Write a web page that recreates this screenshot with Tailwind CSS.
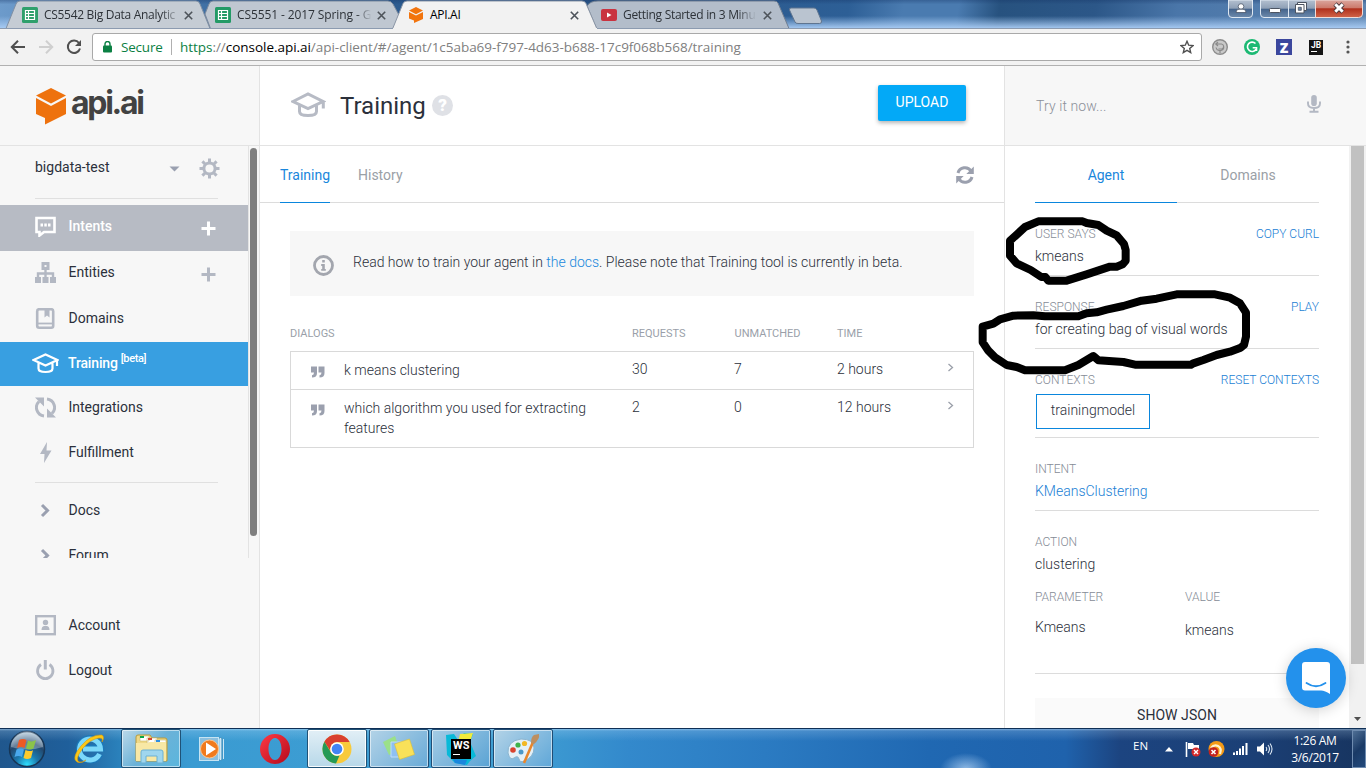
<!DOCTYPE html>
<html lang="en">
<head>
<meta charset="utf-8">
<title>API.AI</title>
<script src="https://cdn.jsdelivr.net/npm/@tailwindcss/browser@4"></script>
</head>
<body class="relative flex h-[768px] w-[1366px] flex-col overflow-hidden bg-white font-['Roboto',sans-serif] text-[14px] text-[#2b303b]">

<!-- tab strip -->
<div class="relative h-[29px] shrink-0 bg-[linear-gradient(100deg,#6d9bcb_0%,#2c5d93_22%,#2b5687_45%,#2d5f96_62%,#4a7bb0_66%,#4a7bb0_70%,#27527f_73%,#2c5788_80%,#4a76a9_86%,#5d84b0_100%)]">
  <div class="absolute inset-0 bg-[linear-gradient(180deg,rgba(20,50,100,0.35)_0%,transparent_15%,transparent_55%,rgba(170,205,245,0.9)_95%)]"></div>
  <svg class="absolute inset-0" width="1366" height="29" viewBox="0 0 1366 29">
    <path d="M596.500 28.500 587 6 Q590 1 598 1 H774 Q777 1 778 3 L789 28.500" fill="#b3bdca" stroke="#6f7d90"/>
    <path d="M6 28.500 L16 4 Q17 1 20 1 H196 Q199 1 200 4 L210 28.500Z" fill="#c5ccd4" stroke="#8090a4"/>
    <path d="M210.500 28.500 L205 14 L209 4 Q210 1 213 1 H388 Q391 1 393 4 L400 17 L395 28.500Z" fill="#bfc7d1" stroke="#7b8a9e"/>
    <path d="M392.500 29 L403 3.500 Q404 1 407 1 H582 Q585 1 586 3.500 L597 29Z" fill="#f2f2f2" stroke="#8a95a5"/>
    <path d="M0 28.500H393M597 28.500H1366" stroke="#8c9bb0"/>
    <path d="M393 29H597" stroke="#f2f2f2" stroke-width="2"/>
    <path d="M789.500 10 Q789 8 791 8 H814 Q816 8 817 10 L821.500 21 Q822 23.500 819.500 23.500 H798 Q795.500 23.500 795 22Z" fill="#bac4d0" stroke="#5f7590"/>
  </svg>
  <div class="relative flex h-[30px] items-center pl-[22px] font-['Open_Sans',sans-serif] text-[12px] tracking-[-0.3px] text-[#2d3238]">
    <div class="flex w-[193px] items-center">
      <svg width="16" height="16" viewBox="0 0 16 16"><rect width="16" height="16" rx="1.500" fill="#2fa06c"/><path d="M3.500 3.500h9v9h-9zM3.500 6.500h9M3.500 9.500h9M6.500 3.500v9" fill="none" stroke="#fff" stroke-width="1.200"/></svg>
      <span class="ml-[6px] w-[137px] whitespace-nowrap tracking-[-0.3px] [mask-image:linear-gradient(90deg,#000_85%,transparent_100%)]">CS5542 Big Data Analytic</span>
      <svg class="ml-[3px]" width="9" height="9" viewBox="0 0 9 9"><path d="M.8.8l7.400 7.400M8.200.8L.8 8.200" stroke="#4d535a" stroke-width="1.600"/></svg>
    </div>
    <div class="flex w-[193px] items-center">
      <svg width="16" height="16" viewBox="0 0 16 16"><rect width="16" height="16" rx="1.500" fill="#239a66"/><path d="M3.500 3.500h9v9h-9zM3.500 6.500h9M3.500 9.500h9M6.500 3.500v9" fill="none" stroke="#fff" stroke-width="1.200"/></svg>
      <span class="ml-[6px] w-[136px] whitespace-nowrap tracking-[-0.1px] [mask-image:linear-gradient(90deg,#000_88%,transparent_99%)]">CS5551 - 2017 Spring - G</span>
      <svg class="ml-[4px]" width="9" height="9" viewBox="0 0 9 9"><path d="M.8.8l7.400 7.400M8.200.8L.8 8.200" stroke="#4d535a" stroke-width="1.600"/></svg>
    </div>
    <div class="flex w-[193px] items-center text-black">
      <svg width="16" height="16" viewBox="0 0 16 16"><path d="M1 3.600 8 0l7 3.600L8 7.200ZM1 5l7 3.600L15 5v7l-9 4v-2.500L1 11.500Z" fill="#f2740d"/></svg>
      <span class="ml-[6px] w-[136px] whitespace-nowrap">API.AI</span>
      <svg class="ml-[4px]" width="9" height="9" viewBox="0 0 9 9"><path d="M.8.8l7.400 7.400M8.200.8L.8 8.200" stroke="#4d535a" stroke-width="1.600"/></svg>
    </div>
    <div class="flex w-[193px] items-center">
      <svg width="16" height="12" viewBox="0 0 16 12"><rect width="16" height="12" rx="2" fill="#c93340"/><path d="M6 3.500v5L10.500 6z" fill="#fff"/></svg>
      <span class="ml-[6px] w-[136px] whitespace-nowrap [mask-image:linear-gradient(90deg,#000_84%,transparent_98%)]">Getting Started in 3 Minu</span>
      <svg class="ml-[4px]" width="9" height="9" viewBox="0 0 9 9"><path d="M.8.8l7.400 7.400M8.200.8L.8 8.200" stroke="#4d535a" stroke-width="1.600"/></svg>
    </div>
  </div>
  <svg class="absolute top-0 right-0" width="140" height="20" viewBox="0 0 140 20">
    <defs>
      <linearGradient id="g1" x1="0" y1="0" x2="0" y2="1"><stop offset="0" stop-color="#b4c0d0"/><stop offset=".48" stop-color="#8e9fb5"/><stop offset=".5" stop-color="#43628a"/><stop offset="1" stop-color="#6d8aac"/></linearGradient>
      <linearGradient id="g2" x1="0" y1="0" x2="0" y2="1"><stop offset="0" stop-color="#dba69d"/><stop offset=".45" stop-color="#cc7a6b"/><stop offset=".5" stop-color="#b0301c"/><stop offset="1" stop-color="#d1654a"/></linearGradient>
    </defs>
    <path d="M2.500 0v14q0 3.500 3.500 3.500h17q3.500 0 3.500-3.500V0z" fill="url(#g1)" stroke="#dfe8f2"/>
    <path d="M34.500 0v14q0 3.500 3.500 3.500h91V0z" fill="url(#g1)" stroke="#dfe8f2"/>
    <path d="M89.500 0v17.500h43q4 0 4-3.500V0z" fill="url(#g2)" stroke="#f0dcd8"/>
    <path d="M62.500 0v17.500" fill="none" stroke="#dfe8f2"/>
    <circle cx="15" cy="6.500" r="2.800" fill="#fff" stroke="#4a5568" stroke-width=".8"/><path d="M10 12.500q0-3.300 3-3.300h4q3 0 3 3.300z" fill="#fff" stroke="#4a5568" stroke-width=".8"/>
    <rect x="43.500" y="8.500" width="11" height="4" rx="1" fill="#fff" stroke="#4c5461"/>
    <path d="M71.500 2.500h9v8h-9z" fill="#fff" stroke="#4c5461"/><path d="M69.500 4.500h8.500v8.500h-8.500z" fill="#fff" stroke="#4c5461"/><path d="M72.300 7.300h3v3h-3z" fill="#6c87a8" stroke="#4c5461" stroke-width=".8"/>
    <path d="M109 4l8 8M117 4l-8 8" stroke="#47363b" stroke-width="4.600"/><path d="M109.300 4.300l7.400 7.400M116.700 4.300l-7.400 7.400" stroke="#fff" stroke-width="3"/>
  </svg>
</div>

<!-- toolbar -->
<div class="flex h-[37px] shrink-0 items-center border-b border-[#b1b1b1] bg-[#f2f2f2] pl-[10px]">
  <svg width="16" height="16" viewBox="0 0 16 16"><path d="M15 8H2.500M8 1.800 1.800 8 8 14.200" fill="none" stroke="#4f4f4f" stroke-width="2"/></svg>
  <svg class="ml-[13px]" width="16" height="16" viewBox="0 0 16 16"><path d="M0 8h12.500M7 1.800 13.200 8 7 14.200" fill="none" stroke="#cfcfcf" stroke-width="2"/></svg>
  <svg class="ml-[11px]" width="16" height="16" viewBox="0 0 16 16"><path d="M13 4A6.200 6.200 0 1 0 14 9.500" fill="none" stroke="#4f4f4f" stroke-width="2"/><path d="M15 1v6H9z" fill="#4f4f4f"/></svg>
  <div class="ml-[10px] flex h-[28px] w-[1110px] items-center rounded-[3px] border border-[#a9a9a9] bg-white font-['Open_Sans',sans-serif] text-[13.5px]">
    <svg class="ml-[10px]" width="9" height="12" viewBox="0 0 9 12"><rect y="4.500" width="9" height="7" rx="1" fill="#0b8043"/><path d="M2 5V3a2.500 2.500 0 0 1 5 0v2" fill="none" stroke="#0b8043" stroke-width="1.400"/></svg>
    <span class="ml-[9px] w-[50px] tracking-[-0.2px] text-[#0b8043]">Secure</span>
    <span class="h-[16px] w-px bg-[#b0b0b0]"></span>
    <span class="ml-[8px] w-[1000px] whitespace-nowrap tracking-[-0.035px] text-[#808080]"><span class="text-[#0b8043]">https</span>://<span class="text-black">console.api.ai</span>/api-client/#/agent/1c5aba69-f797-4d63-b688-17c9f068b568/training</span>
    <svg width="14" height="14" viewBox="0 0 14 14"><path d="M7 1.300l1.700 3.900 4.300.4-3.300 2.800 1 4.200L7 10.400l-3.700 2.200 1-4.200L1 5.600l4.300-.4z" fill="none" stroke="#505050" stroke-width="1.400"/></svg>
  </div>
  <svg class="ml-[10px]" width="16" height="16" viewBox="0 0 16 16"><circle cx="8" cy="8" r="7.300" fill="#c9c9c9" stroke="#8c8c8c" stroke-width="1.400"/><path d="M6 3 3.800 5 6 7M4 5h5.500a2.600 2.600 0 0 1 .5 5H6.500M4 8.500q.5 2.500 3 3h2q2.500-.5 3-3M8 11.500V14" fill="none" stroke="#8a8a8a" stroke-width="1.200"/></svg>
  <svg class="ml-[16px]" width="16" height="16" viewBox="0 0 16 16"><circle cx="8" cy="8" r="8" fill="#1cb973"/><path d="M11.500 4.500A4.700 4.700 0 1 0 12 10.500M12.500 12V8.700H8.700" fill="none" stroke="#fff" stroke-width="1.600"/></svg>
  <div class="ml-[16px] flex h-[16px] w-[16px] items-center justify-center bg-[#3b479d] font-['Open_Sans',sans-serif] text-[14px] font-extrabold text-white">Z</div>
  <div class="ml-[17px] flex h-[15px] w-[14px] flex-col bg-[#151515] pt-px pl-[2px] text-[8.5px] leading-[9px] font-bold text-white"><span>JB</span><span class="mt-px h-px w-[6px] bg-white"></span></div>
  <svg class="ml-[23px]" width="4" height="14" viewBox="0 0 4 14"><circle cx="2" cy="2" r="1.600" fill="#555"/><circle cx="2" cy="7" r="1.600" fill="#555"/><circle cx="2" cy="12" r="1.600" fill="#555"/></svg>
</div>

<!-- page -->
<div class="flex h-[662px] shrink-0">

  <!-- sidebar -->
  <div class="flex w-[260px] shrink-0 flex-col border-r border-[#e3e3e3] bg-[#f7f7f7]">
    <div class="flex h-[80px] shrink-0 items-center border-b border-[#e3e3e3] pl-[35px]">
      <svg width="32" height="38" viewBox="0 0 32 38"><path d="M1 8.500 16 1l15 7.500L16 16.500ZM1 11l15 8 15-8v16L10 37.500V31L1 27Z" fill="#ee720e"/></svg>
      <span class="-mt-[5px] ml-[4px] font-['Inter',sans-serif] text-[32px] leading-[32px] font-bold tracking-[-2.3px] text-[#424242]">api.ai</span>
    </div>
    <div class="flex h-[412px] shrink-0">
      <div class="flex w-[249px] shrink-0 flex-col overflow-hidden border-r border-[#e3e3e3]">
        <div class="ml-[35px] flex h-[53px] w-[183px] shrink-0 items-center border-b border-[#e0e0e0] pb-[9px]">
          <span class="w-[134px] shrink-0">bigdata-test</span>
          <svg class="mt-[3px] shrink-0" width="11" height="6" viewBox="0 0 11 6"><path d="M.5.500h10L5.500 5.500z" fill="#9aa0b0"/></svg>
          <svg class="mt-[2px] ml-[19px] shrink-0" width="21" height="21" viewBox="0 0 21 21"><circle cx="10.500" cy="10.500" r="5.600" fill="none" stroke="#b3b8c3" stroke-width="3"/><path d="M10.500.5v4M10.500 16.500v4M.5 10.500h4M16.500 10.500h4M3.400 3.400l2.900 2.900M14.700 14.700l2.900 2.900M17.600 3.400l-2.900 2.900M6.300 14.700l-2.900 2.900" stroke="#b3b8c3" stroke-width="3"/></svg>
        </div>
        <div class="mt-[6px] flex h-[46px] shrink-0 items-center bg-[#b7bbc4] pb-[3px] pl-[35px] text-white">
          <svg width="21" height="21" viewBox="0 0 21 21"><path d="M1.500 2h18v14H9L4.500 19.500V16h-3z" fill="none" stroke="#fff" stroke-width="2.600"/><path d="M5.500 9h2.500M9.300 9h2.500M13 9h2.500" stroke="#fff" stroke-width="3"/></svg>
          <span class="ml-[12.500px] w-[132.500px] font-medium">Intents</span>
          <svg class="mt-[3px]" width="15" height="15" viewBox="0 0 15 15"><path d="M7.500 0.500v14M.500 7.500h14" stroke="#fff" stroke-width="3"/></svg>
        </div>
        <div class="flex h-[46px] shrink-0 items-center pb-[3px] pl-[35px]">
          <svg width="21" height="21" viewBox="0 0 21 21"><rect x="8" y="1.500" width="5" height="5" fill="none" stroke="#b3b8c3" stroke-width="3"/><path d="M10.500 7v8M3 15v-3.500h15V15" fill="none" stroke="#b3b8c3" stroke-width="2.400"/><path d="M0 15h6v6H0zM7.500 15h6v6h-6zM15 15h6v6h-6z" fill="#b3b8c3"/></svg>
          <span class="ml-[12.500px] w-[132.500px]">Entities</span>
          <svg class="mt-[3px]" width="15" height="15" viewBox="0 0 15 15"><path d="M7.500 0.500v14M.500 7.500h14" stroke="#b3b8c3" stroke-width="3"/></svg>
        </div>
        <div class="flex h-[45px] shrink-0 items-center pb-[3px] pl-[35px]">
          <svg width="21" height="21" viewBox="0 0 21 21"><rect x="2.200" y="1.200" width="16" height="18.500" rx="2" fill="none" stroke="#b3b8c3" stroke-width="2.600"/><path d="M3 15.500h15" stroke="#b3b8c3" stroke-width="1.800"/><path d="M9.500 1v8.500L12 7.500l2.500 2V1z" fill="#b3b8c3"/></svg>
          <span class="ml-[12.500px]">Domains</span>
        </div>
        <div class="flex h-[44px] shrink-0 items-center bg-[#389fe1] pb-[2px] pl-[32px] text-white">
          <svg width="27" height="21" viewBox="0 0 27 21"><path d="M1.500 7 13.500 1.500 25.500 7 13.500 12.500ZM6.500 10v5.500q0 3.500 7 3.500t7-3.500V10M25 7v6" fill="none" stroke="#fff" stroke-width="2.200"/></svg>
          <span class="ml-[9px] font-medium tracking-[-0.15px]">Training</span>
          <span class="-mt-[7px] ml-[3px] text-[11px] font-medium tracking-[-0.4px]">[beta]</span>
        </div>
        <div class="flex h-[45px] shrink-0 items-center pb-[3px] pl-[35px]">
          <svg width="21" height="21" viewBox="0 0 21 21"><path d="M9 19A8.500 8.500 0 0 1 4 4.500M12 2a8.500 8.500 0 0 1 5 14.500" fill="none" stroke="#b3b8c3" stroke-width="3"/><path d="M0 .5h9v9zM12 11.500v9h9z" fill="#b3b8c3"/></svg>
          <span class="ml-[12.500px]">Integrations</span>
        </div>
        <div class="flex h-[45px] shrink-0 items-center pb-[3px] pl-[35px]">
          <svg width="21" height="21" viewBox="0 0 21 21"><path d="M12 0 5 12h4.500L9 21l7.500-12.500H11.500z" fill="#b3b8c3"/></svg>
          <span class="ml-[12.500px]">Fulfillment</span>
        </div>
        <div class="mt-[6px] ml-[35px] h-px w-[183px] shrink-0 bg-[#e0e0e0]"></div>
        <div class="mt-[5px] flex h-[45px] shrink-0 items-center pl-[34px]">
          <svg width="21" height="21" viewBox="0 0 21 21"><path d="M8 5l5.500 5.500L8 16" fill="none" stroke="#9aa0b0" stroke-width="3"/></svg>
          <span class="ml-[13.500px]">Docs</span>
        </div>
        <div class="flex h-[45px] shrink-0 items-center pl-[34px]">
          <svg width="21" height="21" viewBox="0 0 21 21"><path d="M8 5l5.500 5.500L8 16" fill="none" stroke="#9aa0b0" stroke-width="3"/></svg>
          <span class="ml-[13.500px]">Forum</span>
        </div>
      </div>
      <div class="mt-[2px] ml-px h-[388px] w-[7px] rounded-[4px] bg-[#7f7f7f]"></div>
    </div>
    <div class="mt-[45px] flex h-[45px] items-center pl-[35px]">
      <svg width="21" height="21" viewBox="0 0 21 21"><rect x="1.200" y="1.200" width="18.600" height="18" fill="none" stroke="#b3b8c3" stroke-width="2.400"/><circle cx="10.500" cy="7.500" r="2.700" fill="#b3b8c3"/><path d="M6.500 15q0-3.500 2.500-4h3q2.500.5 2.500 4z" fill="#b3b8c3"/></svg>
      <span class="ml-[12.500px]">Account</span>
    </div>
    <div class="flex h-[45px] items-center pl-[35px]">
      <svg width="21" height="21" viewBox="0 0 21 21"><path d="M6 4.500a7.700 7.700 0 1 0 8.500 0" fill="none" stroke="#b3b8c3" stroke-width="2.800"/><path d="M10.300 0v9.500" stroke="#b3b8c3" stroke-width="3"/></svg>
      <span class="ml-[12.500px]">Logout</span>
    </div>
  </div>

  <!-- training -->
  <div class="flex w-[745px] shrink-0 flex-col border-r border-[#e3e3e3]">
    <div class="flex h-[80px] shrink-0 items-center border-b border-[#e3e3e3] pl-[31px]">
      <svg class="-mt-[2px]" width="35" height="26" viewBox="0 0 35 26"><path d="M2 9.500 17 2l15 7.500-15 7.200ZM8.500 13v6.500q0 4 8.500 4t8.500-4V13M32.300 9.500v7" fill="none" stroke="#b7bbc5" stroke-width="3"/></svg>
      <span class="ml-[14px] w-[92px] text-[24px] leading-[30px]">Training</span>
      <span class="flex h-[21px] w-[21px] items-center justify-center rounded-full bg-[#dfe1e6] text-[17px] leading-[21px] font-black text-white">?</span>
      <span class="-mt-[6px] ml-[425px] flex h-[36px] w-[88px] items-center justify-center rounded-[2px] bg-[#03a9f7] text-[14px] text-white shadow-[0_2px_4px_rgba(0,0,0,0.3)]"><span class="-mt-px">UPLOAD</span></span>
    </div>
    <div class="flex h-[57px] shrink-0 border-b border-[#dcdcdc] pl-[20px] text-[14px] leading-[59px]">
      <span class="h-[57px] w-[50px] border-b border-[#0a86dd] text-[#1a87dc]">Training</span>
      <span class="ml-[28px] w-[598px] text-[#9aa0a6]">History</span>
      <svg class="mt-[20px]" width="18" height="18" viewBox="0 0 18 18"><path d="M2 7A7.200 7.200 0 0 1 15 5M16 11A7.200 7.200 0 0 1 3 13" fill="none" stroke="#9ba0ae" stroke-width="3"/><path d="M17.800.5V8h-7.500zM.2 17.500V10h7.500z" fill="#9ba0ae"/></svg>
    </div>
    <div class="mt-[28px] ml-[30px] flex h-[65px] w-[684px] shrink-0 items-center bg-[#f7f7f7] pl-[23px] font-light">
      <svg class="mt-[3px]" width="21" height="21" viewBox="0 0 21 21"><circle cx="10.500" cy="10.500" r="9" fill="none" stroke="#a3a6ae" stroke-width="2.800"/><path d="M9.200 5h2.600v2.400H9.200zM8.200 9h3.600v5h1v1.800H8.200V14h1v-3h-1z" fill="#a3a6ae"/></svg>
      <span class="-mt-[3px] ml-[19px] whitespace-nowrap">Read how to train your agent in <span class="text-[#1a87dc]">the docs</span>. Please note that Training tool is currently in beta.</span>
    </div>
    <div class="mt-[30px] ml-[30px] grid h-[16px] grid-cols-[342px_102.5px_102.5px_100px] text-[11px] leading-[16px] text-[#9a9fa9]">
      <span>DIALOGS</span><span>REQUESTS</span><span>UNMATCHED</span><span>TIME</span>
    </div>
    <div class="mt-[9px] ml-[30px] w-[684px] border border-[#d9d9d9] leading-[20px] font-light">
      <div class="grid h-[38px] grid-cols-[53px_288px_102px_103px_110px_20px] border-b border-[#d9d9d9] pt-[8px]">
        <svg class="mt-[6px] ml-[20px]" width="14" height="12" viewBox="0 0 14 12"><path d="M0 .500h6V7q0 4.500-5 4.500V9.300Q3 9 3 6.500H0zM7.500.500h6V7q0 4.500-5 4.500V9.300q2-.3 2-2.800h-3z" fill="#9ba0ae"/></svg>
        <span>k means clustering</span><span class="-mt-px">30</span><span class="-mt-px">7</span><span class="-mt-px">2 hours</span>
        <svg class="mt-[3px]" width="8" height="9" viewBox="0 0 8 9"><path d="M1.500 1l4 3.500-4 3.500" fill="none" stroke="#9a9fa9" stroke-width="1.300"/></svg>
      </div>
      <div class="grid h-[57px] grid-cols-[53px_288px_102px_103px_110px_20px] pt-[8px]">
        <svg class="mt-[6px] ml-[20px]" width="14" height="12" viewBox="0 0 14 12"><path d="M0 .500h6V7q0 4.500-5 4.500V9.300Q3 9 3 6.500H0zM7.500.500h6V7q0 4.500-5 4.500V9.300q2-.3 2-2.800h-3z" fill="#9ba0ae"/></svg>
        <span>which algorithm you used for extracting<br>features</span><span class="-mt-px">2</span><span class="-mt-px">0</span><span class="-mt-px">12 hours</span>
        <svg class="mt-[3px]" width="8" height="9" viewBox="0 0 8 9"><path d="M1.500 1l4 3.500-4 3.500" fill="none" stroke="#9a9fa9" stroke-width="1.300"/></svg>
      </div>
    </div>
  </div>

  <!-- test console -->
  <div class="flex w-[361px] shrink-0 flex-col">
    <div class="flex h-[80px] shrink-0 items-center border-b border-[#e3e3e3] bg-[#f7f7f7] pl-[31px]">
      <span class="mt-[2px] w-[271px] font-light tracking-[0.1px] text-[#8c9099]">Try it now...</span>
      <svg class="-mt-[4px]" width="14" height="18" viewBox="0 0 14 18"><rect x="4.200" y="0" width="5.600" height="11" rx="2.800" fill="#b3b8c3"/><path d="M1 6.500v2q0 4.500 6 4.500t6-4.500v-2M7 13v3.500M2.500 16.700h9" fill="none" stroke="#b3b8c3" stroke-width="1.900"/></svg>
    </div>
    <div class="flex h-[582px] shrink-0">
      <div class="flex w-[344px] shrink-0 flex-col overflow-hidden pr-[30px] pl-[30px] leading-[20px] font-light">
        <div class="flex h-[57px] shrink-0 text-center leading-[59px] font-normal">
          <span class="w-[142px] border-b border-[#0a86dd] text-[#1a87dc]">Agent</span>
          <span class="flex-1 border-b border-[#dcdcdc] text-[#9aa0a6]">Domains</span>
        </div>
        <div class="flex h-[73px] shrink-0 flex-col border-b border-[#dcdcdc] pt-[21px]">
          <div class="flex justify-between text-[12px] text-[#858b96]"><span>USER SAYS</span><span class="text-[#1a7ed4]">COPY CURL</span></div>
          <span class="mt-[2px]">kmeans</span>
        </div>
        <div class="flex h-[73px] shrink-0 flex-col border-b border-[#dcdcdc] pt-[21px]">
          <div class="flex justify-between text-[12px] text-[#858b96]"><span>RESPONSE</span><span class="text-[#1a7ed4]">PLAY</span></div>
          <span class="mt-[2px]">for creating bag of visual words</span>
        </div>
        <div class="flex h-[89px] shrink-0 flex-col border-b border-[#dcdcdc] pt-[21px]">
          <div class="flex justify-between text-[12px] text-[#858b96]"><span>CONTEXTS</span><span class="text-[#1a7ed4]">RESET CONTEXTS</span></div>
          <span class="mt-[4px] ml-px h-[35px] w-[114px] border border-[#0a86dd] text-center leading-[31px]">trainingmodel</span>
        </div>
        <div class="flex h-[73px] shrink-0 flex-col border-b border-[#dcdcdc] pt-[21px]">
          <span class="text-[12px] text-[#858b96]">INTENT</span>
          <span class="mt-[2px] text-[#1a7ed4]">KMeansClustering</span>
        </div>
        <div class="flex h-[163px] shrink-0 flex-col border-b border-[#dcdcdc] pt-[21px]">
          <span class="text-[12px] text-[#858b96]">ACTION</span>
          <span class="mt-[2px]">clustering</span>
          <div class="mt-[13px] grid grid-cols-[150px_1fr] text-[12px] text-[#858b96]"><span>PARAMETER</span><span>VALUE</span></div>
          <div class="mt-[10px] grid grid-cols-[150px_1fr]"><span>Kmeans</span><span class="mt-[3px]">kmeans</span></div>
        </div>
        <div class="mt-[24px] h-[36px] shrink-0 bg-[#fafafa] text-center leading-[35px] font-normal tracking-[0.05px]">SHOW JSON</div>
      </div>
      <div class="flex w-[17px] flex-col items-center justify-between bg-[#f1f1f1] pb-[7px]">
        <div class="h-[518px] w-[13px] bg-[#c1c1c1]"></div>
        <svg width="7" height="4" viewBox="0 0 7 4"><path d="M0 0h7L3.500 4z" fill="#505050"/></svg>
      </div>
    </div>
  </div>
</div>

<!-- taskbar -->
<div class="flex h-[40px] shrink-0 items-center border-t border-[#0f2f55] bg-[linear-gradient(180deg,rgba(200,230,255,0.55)_0,rgba(200,230,255,0.2)_2px,transparent_12px),radial-gradient(ellipse_26px_16px_at_966px_40px,rgba(190,220,250,0.7),transparent),linear-gradient(90deg,#20578d_0,#1f5f9b_5%,#2b83bd_9%,#3a9bd2_14%,#3f9fd3_38%,#3389cc_46%,#2b7bc2_56%,#2068b2_68%,#1f62ac_78%,#1c4480_82%,#1b3f75_92%,#17345f_100%)]">
  <svg class="ml-[8px]" width="38" height="38" viewBox="0 0 38 38">
    <defs><radialGradient id="orb" cx=".5" cy=".95" r=".9"><stop offset="0" stop-color="#2ee0ff"/><stop offset=".35" stop-color="#1b78ad"/><stop offset=".7" stop-color="#23466c"/><stop offset="1" stop-color="#a3bdd0"/></radialGradient></defs>
    <circle cx="19" cy="19" r="17.500" fill="url(#orb)" stroke="#173656" stroke-width="1.500"/><path d="M3 17a16 16 0 0 1 32 0q-16 5-32 0z" fill="#fff" opacity=".3"/>
    <path d="M11 10q4-2 7.500 0l-2 8q-3.500-2-7.500 0z" fill="#ee5a24"/><path d="M20 10.500q4 2 8-.5l-2.500 8.500q-3.500 2-7.500 0z" fill="#8bc34a"/><path d="M8.500 19.500q4-2 7.500 0l-2 7.500q-3.500-2-7.500 0z" fill="#4aa8ec"/><path d="M17.500 20q4 2 7.500.2L23 28q-4 2-7.500 0z" fill="#fdcb2e"/>
  </svg>
  <svg class="ml-[27px]" width="32" height="34" viewBox="0 0 32 34"><path d="M27 22a11 11 0 1 1 1-6H11" fill="none" stroke="#1b78ba" stroke-width="6.400"/><path d="M26.500 22A10.500 10.500 0 1 1 27.500 17H10" fill="none" stroke="#7bd8fa" stroke-width="5"/><path d="M4 30Q-2 26 8 14T29 3q3 2 0 7Q31 4 22 7T6 22q-3 6 0 8 4 1 7-2-5 4-9 2z" fill="#fbc816" stroke="#d99a10" stroke-width=".6"/></svg>
  <div class="ml-[16px] flex h-[39px] w-[60px] items-center justify-center rounded-[2px] border border-[#1f5277] bg-[linear-gradient(135deg,#bcd9e9,#6bb2d8_50%,#5ab6dd)] shadow-[inset_0_0_0_1px_rgba(255,255,255,0.55)]">
    <svg width="34" height="32" viewBox="0 0 34 32"><path d="M2 28V4q0-2 2-2h12l2 3h13q2 0 2 2v21z" fill="#efd987" stroke="#b79a3c"/><path d="M6 3h9v5H6zM13 5h10v5H13zM21 7h11v4H21z" fill="#fff" stroke="#ccb96d" stroke-width=".6"/><path d="M6 3h4v2H6z" fill="#0aa845"/><path d="M14 5h4v2h-4z" fill="#d9432f"/><path d="M22 7h4v2h-4z" fill="#2f8fe0"/><path d="M2 10h12l2-1h16v19H2z" fill="#f8e8a5"/><path d="M7 30V19q0-2 2-2h18q2 0 2 2v11h-6v-7H12v7z" fill="#9fd6ee" stroke="#6bb0d4"/></svg>
  </div>
  <svg class="ml-[18px]" width="28" height="26" viewBox="0 0 28 26"><path d="M18 2h5v22h-5z" fill="#a6d2ea" stroke="#4f94bd"/><path d="M21.500 2v22M24.500 3v20" stroke="#cfe8f5"/><rect x=".5" y="1.500" width="19" height="23" fill="#8abfdf" stroke="#c6e4f3"/><circle cx="10.500" cy="13" r="9" fill="#f07a1d" stroke="#fcc48d"/><path d="M7 6.500v13L17 13z" fill="#fff"/></svg>
  <svg class="ml-[33px]" width="30" height="30" viewBox="0 0 30 30"><defs><linearGradient id="op" x1="0" x2="1" y2="1"><stop offset="0" stop-color="#ff3a44"/><stop offset="1" stop-color="#b30a1c"/></linearGradient></defs><path fill-rule="evenodd" d="M15 0a15 15 0 1 0 0 30 15 15 0 0 0 0-30zm0 4c4 0 6.500 5 6.500 11S19 26 15 26 8.500 21 8.500 15 11 4 15 4z" fill="url(#op)"/></svg>
  <div class="ml-[17px] flex h-[39px] w-[60px] items-center justify-center rounded-[2px] border border-[#1f5277] bg-[linear-gradient(180deg,#e2eff6,#b7d8e9)] shadow-[inset_0_0_0_1px_rgba(255,255,255,0.9)]">
    <svg width="30" height="30" viewBox="0 0 30 30"><circle cx="15" cy="15" r="14.500" fill="#f8ca3b"/><path d="M2.400 7.700A14.500 14.500 0 0 1 27.600 8H15a7 7 0 0 0-6.500 9z" fill="#d9402f"/><path d="M2.400 7.700 9 18.500A7 7 0 0 0 17.500 21.500L14 29.500A14.500 14.500 0 0 1 2.400 7.700z" fill="#249a56"/><circle cx="15" cy="15" r="6.800" fill="#fff"/><circle cx="15" cy="15" r="5.300" fill="#4285f4"/></svg>
  </div>
  <div class="ml-[2px] flex h-[39px] w-[60px] items-center justify-center rounded-[2px] border border-[#1f4d75] bg-[linear-gradient(135deg,#b3d3e7,#68aad7)] shadow-[inset_0_0_0_1px_rgba(255,255,255,0.55)]">
    <svg width="34" height="28" viewBox="0 0 34 28"><path d="M1 7l12-6 5 14-11 5z" fill="#9be08a"/><path d="M9 7h13v15H9z" fill="#8fc0f2" stroke="#bfdcf7"/><path d="M12.500 9l15-5 5 15.500-15 5z" fill="#f9e159" stroke="#dcbf35" stroke-width=".6"/></svg>
  </div>
  <div class="ml-[2px] flex h-[39px] w-[60px] items-center justify-center rounded-[2px] border border-[#1f4d75] bg-[linear-gradient(135deg,#a5cce5,#5aa3d4)] shadow-[inset_0_0_0_1px_rgba(255,255,255,0.55)]">
    <div class="relative h-[32px] w-[32px]">
      <svg class="absolute inset-0" width="32" height="32" viewBox="0 0 32 32"><path d="M1 2l8-1 4 6 6-7 9 1-3 8 6 14-6 5-3 4-12-2-8-8z" fill="#08b9d8"/><path d="M15 1l13-1-3 9H13z" fill="#f3ec3b"/><path d="M8 26l14 1-2 5-10-2z" fill="#1a86dd"/></svg>
      <div class="absolute top-[6px] left-[6px] flex h-[20px] w-[20px] flex-col bg-black pl-[2px] text-[11px] leading-[13px] font-bold text-white"><span>WS</span><span class="mt-[2px] h-px w-[7px] bg-white"></span></div>
    </div>
  </div>
  <div class="ml-[2px] flex h-[39px] w-[60px] items-center justify-center rounded-[2px] border border-[#1f4d75] bg-[linear-gradient(135deg,#b3d3e7,#5fa7d8)] shadow-[inset_0_0_0_1px_rgba(255,255,255,0.55)]">
    <svg width="34" height="32" viewBox="0 0 34 32"><path d="M2 20Q1 8 15 6q13 0 13 9t-10 13Q14 30 13 26t-5-1-6-5z" fill="#e4f0f7" stroke="#8ab4cf"/><circle cx="7" cy="17" r="2.800" fill="#d9432f"/><circle cx="12" cy="12" r="2.600" fill="#3fb34a"/><circle cx="18.500" cy="10.500" r="2.600" fill="#f2b824"/><circle cx="15" cy="19" r="2.500" fill="#4b98c9"/><path d="M18 30l9-21" stroke="#e8862c" stroke-width="2.600"/><path d="M25 10q0-6 3-8l5-1q1 5-5 10z" fill="#bd8f60"/></svg>
  </div>
  <div class="ml-auto flex h-full w-[233px] items-center font-['Open_Sans',sans-serif] text-[12px] text-white">
    <span class="-mt-[5px] w-[32px] text-[11.5px]">EN</span>
    <svg class="mt-[2px]" width="8" height="5" viewBox="0 0 8 5"><path d="M0 4.500h8L4 0z" fill="#fff"/></svg>
    <svg class="ml-[12px]" width="16" height="16" viewBox="0 0 16 16"><path d="M1.500 1v15" stroke="#fff" stroke-width="1.600"/><path d="M3 2h5l1 2h5v6H9L8 8H3z" fill="#fff"/><circle cx="11" cy="11" r="4.500" fill="#d42a2a"/><path d="M9 9l4 4M13 9l-4 4" stroke="#fff" stroke-width="1.400"/></svg>
    <svg class="ml-[7px]" width="17" height="16" viewBox="0 0 17 16"><circle cx="8.500" cy="8" r="8" fill="#f59a16"/><path d="M3 7q3-4 7-2t2 8" fill="none" stroke="#fff2cf" stroke-width="2.200"/><circle cx="5.500" cy="11" r="4.800" fill="#c4221f"/><path d="M3.500 9l4 4M7.500 9l-4 4" stroke="#fff" stroke-width="1.600"/></svg>
    <svg class="ml-[8px]" width="15" height="12" viewBox="0 0 15 12"><path d="M1 9.500V12M4 8v4M7 5.500V12M10 3v9M13.500 0v12" stroke="#fff" stroke-width="2"/></svg>
    <svg class="ml-[9px]" width="16" height="14" viewBox="0 0 16 14"><path d="M0 4.500h3L7 .500v13L3 9.500H0z" fill="#fff"/><path d="M9 5q1.500 2 0 4M11 3q3 4 0 8M13 1.500q4 5.500 0 11" fill="none" stroke="#dfeaf5" stroke-width="1.100"/></svg>
    <div class="ml-[11px] flex w-[62px] flex-col items-center leading-[17px] tracking-[-0.3px] whitespace-nowrap"><span>1:26 AM</span><span>3/6/2017</span></div>
    <div class="ml-auto h-[38px] w-[14px] border border-[#6f8cb0] bg-[linear-gradient(135deg,#4f6f95,#1a3a66_50%,#234a7c)]"></div>
  </div>
</div>

<!-- chat launcher -->
<div class="absolute top-[648px] left-[1286px] flex h-[60px] w-[60px] items-center justify-center rounded-full bg-[#2391ec] shadow-[0_2px_14px_rgba(0,0,0,0.18)]">
  <svg width="28" height="32" viewBox="0 0 28 32"><path d="M3 0h22q3 0 3 3v29q-5-3.500-9-3.500H3q-3 0-3-3V3q0-3 3-3z" fill="#fff"/><path d="M4.500 21q9.500 6.500 19 0" fill="none" stroke="#2391ec" stroke-width="1.800" stroke-linecap="round"/></svg>
</div>

<!-- hand-drawn circles -->
<svg class="pointer-events-none absolute top-[150px] left-[970px]" width="396" height="240" viewBox="0 0 1188 720">
  <g fill="none" stroke="#000" stroke-width="24" stroke-linejoin="round" stroke-linecap="round">
    <path d="M205 214H338L350 219 385 225 410 242 440 256 462 282 467 300V332L458 343 440 350H420L350 373 290 392H235L226 381H214L182 360 140 340 120 317V272L140 254 165 231Z"/>
    <path d="M130 497L190 496 225 499H325L350 490 380 487 410 479 460 468 515 452 560 446 620 433H735L780 443 810 460 828 488V560L822 585 812 593 780 605 740 615 700 630 670 640 663 644H495L460 636 385 631 370 618 350 630 325 645 285 661H165L140 651 110 645 75 622 55 602 38 577V530L70 521 90 508Z"/>
  </g>
</svg>
</body>
</html>
